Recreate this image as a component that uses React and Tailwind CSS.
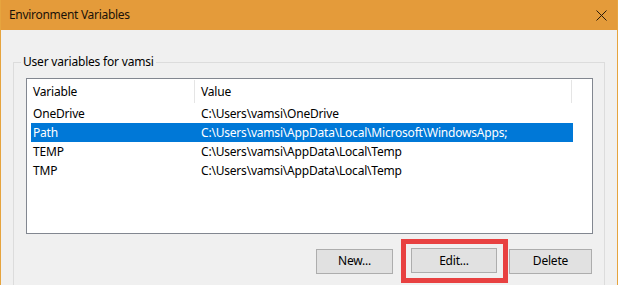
import React from "react";

const rows = [
  { name: "OneDrive", value: "C:\\Users\\vamsi\\OneDrive" },
  { name: "Path", value: "C:\\Users\\vamsi\\AppData\\Local\\Microsoft\\WindowsApps;", selected: true },
  { name: "TEMP", value: "C:\\Users\\vamsi\\AppData\\Local\\Temp" },
  { name: "TMP", value: "C:\\Users\\vamsi\\AppData\\Local\\Temp" },
];

export default function App() {
  return (
    <div
      className="w-[618px] h-[285px] overflow-hidden bg-[#f0f0f0] border-x border-x-[#e6a43e] text-[12px] tracking-[-0.2px] text-black"
      style={{ fontFamily: '"Noto Sans", "Open Sans", sans-serif' }}
    >
      <div className="h-[30px] bg-[#e49b3a] flex items-center justify-between pl-[8px] pr-[10px]">
        <span className="text-[12px] tracking-[-0.3px] text-[#1a1208] leading-none">Environment Variables</span>
        <svg width="11" height="11" viewBox="0 0 11 11" className="block">
          <path d="M0.5 0.5 L10.5 10.5 M10.5 0.5 L0.5 10.5" stroke="#2a1a0a" strokeWidth="1" fill="none" />
        </svg>
      </div>

      <div className="relative mt-[32px] ml-[12px] w-[592px] h-[240px] border border-[#dcdcdc] border-b-0">
        <span className="absolute left-[7px] top-[-10px] px-[2px] bg-[#f0f0f0] leading-[18px]">
          User variables for vamsi
        </span>

        <div className="mt-[15px] ml-[12px] w-[567px] h-[156px] border border-[#828790] bg-white">
          <div className="flex h-[25px] items-center">
            <div className="w-[168px] h-[23px] flex items-center pl-[6px] border-r border-r-[#e5e5e5]">Variable</div>
            <div className="w-[377px] h-[23px] flex items-center pl-[6px] border-r border-r-[#e5e5e5]">Value</div>
          </div>
          {rows.map((r) => (
            <div
              key={r.name}
              className={
                "flex h-[19px] items-center ml-[4px] w-[542px] " +
                (r.selected ? "bg-[#0078d7] text-white" : "")
              }
            >
              <div className="w-[168px] pl-[2px] whitespace-nowrap">{r.name}</div>
              <div className="pl-[2px] whitespace-nowrap">{r.value}</div>
            </div>
          ))}
        </div>

        <div className="flex items-center justify-end pr-[12px] mt-[5px]">
          <button className="w-[77px] h-[25px] bg-[#e1e1e1] border border-[#adadad] flex items-center justify-center">
            New...
          </button>
          <div className="ml-[8px] border-[5px] border-[#e84141] pt-[4px] pb-[5px] pl-[5px] pr-[6px]">
            <button className="w-[86px] h-[25px] bg-[#e1e1e1] border border-[#adadad] flex items-center justify-center">
              Edit...
            </button>
          </div>
          <button className="ml-[1px] w-[83px] h-[25px] bg-[#e1e1e1] border border-[#adadad] flex items-center justify-center">
            Delete
          </button>
        </div>
      </div>
    </div>
  );
}
